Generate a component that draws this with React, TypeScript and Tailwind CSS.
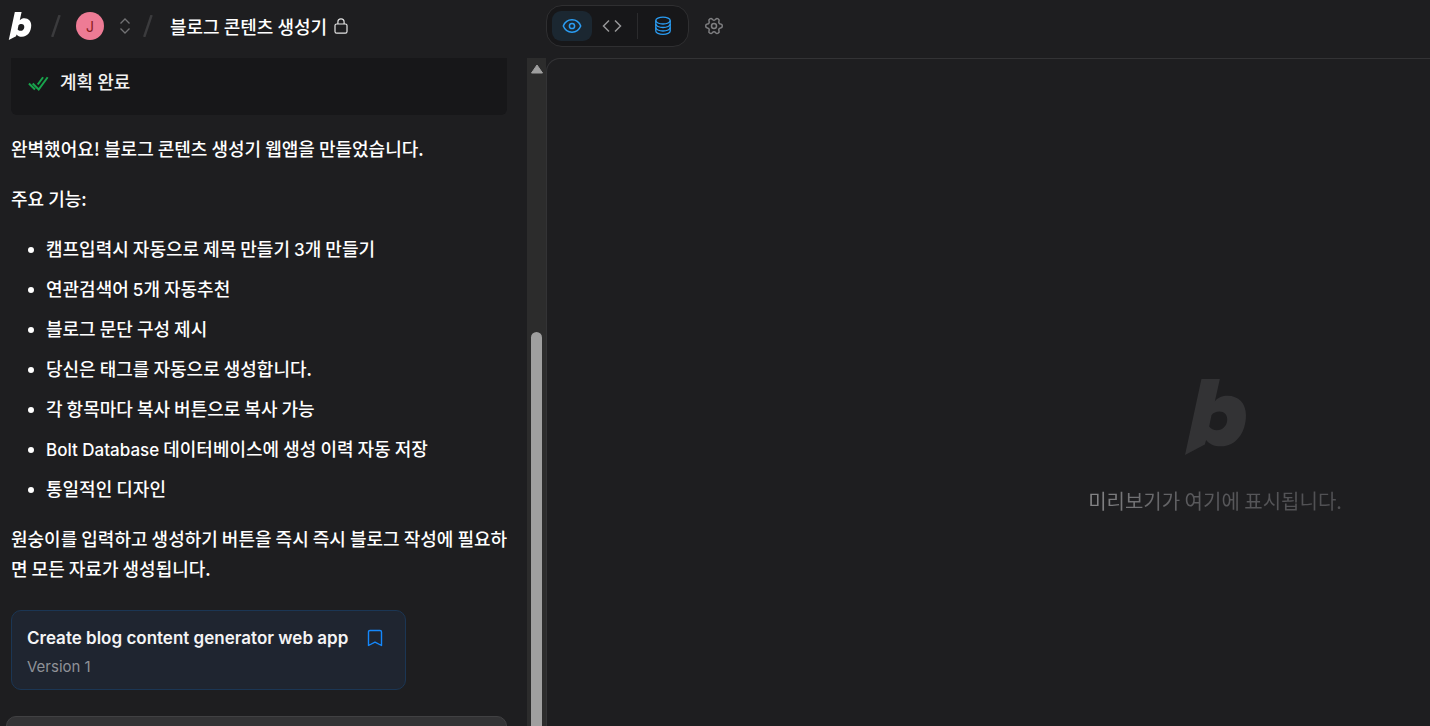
import type { ReactNode } from "react"
import { Settings } from "lucide-react"

const latin = "font-['Inter',sans-serif] text-[17px] leading-none"

function BoltLogo({ className }: { className?: string }) {
  return (
    <svg viewBox="0 0 182 227" className={className} fill="currentColor" aria-hidden="true">
      <path
        fillRule="evenodd"
        d="M49 0H104L89 67C98 55 112 50 127 50C160 50 182 73 182 108C182 160 152 201 107 201C86 201 73 194 63 182L59 196L0 227ZM79 108L72 142C77 149 85 153 95 153C113 153 126 139 126 121C126 106 117 97 103 97C93 97 84 101 79 108Z"
      />
    </svg>
  )
}

function Slash() {
  return (
    <svg viewBox="0 0 10 22" className="h-[22px] w-[10px]" stroke="#3b3b3d" strokeWidth="2.4" aria-hidden="true">
      <path d="M1.2 22L8.6 0" />
    </svg>
  )
}

const features: ReactNode[] = [
  <>캠프입력시 자동으로 제목 만들기 <span className={latin}>3</span>개 만들기</>,
  <>연관검색어 <span className={latin}>5</span>개 자동추천</>,
  "블로그 문단 구성 제시",
  "당신은 태그를 자동으로 생성합니다.",
  "각 항목마다 복사 버튼으로 복사 가능",
  <><span className={latin}>Bolt Database</span> 데이터베이스에 생성 이력 자동 저장</>,
  "통일적인 디자인",
]

function Header() {
  return (
    <header className="flex h-[58px] shrink-0 items-start pt-[5px]">
      <div className="flex h-[42px] w-[546px] shrink-0 items-center pl-2">
        <a href="#" aria-label="Bolt" className="text-white">
          <BoltLogo className="h-7 w-6" />
        </a>
        <div className="ml-[19px] flex items-center">
          <Slash />
          <span className="ml-[15px] flex h-7 w-7 items-center justify-center rounded-full bg-[#ee7b95] font-['Inter',sans-serif] text-[14px] text-[#8a1a1c]">
            J
          </span>
          <button aria-label="Switch workspace" className="ml-4 text-[#727274]">
            <svg viewBox="0 0 10 16" className="h-4 w-[10px]" fill="none" stroke="currentColor" strokeWidth="1.3">
              <path d="M0.5 5.5L5 1L9.5 5.5M0.5 10.5L5 15L9.5 10.5" />
            </svg>
          </button>
          <span className="ml-[13px]">
            <Slash />
          </span>
        </div>
        <h1 className="ml-[17px] text-[18px] leading-7 font-medium whitespace-nowrap text-white">블로그 콘텐츠 생성기</h1>
        <svg viewBox="0 0 14 16" className="ml-[7px] h-4 w-[14px]" fill="none" stroke="#e4e4e4" strokeWidth="1.2" aria-hidden="true">
          <rect x="1" y="6" width="12" height="9.2" rx="1.6" />
          <path d="M3.9 6V3.9a3.1 3.1 0 0 1 6.2 0V6" />
        </svg>
      </div>

      <div className="flex h-[42px] items-center rounded-[16px] border border-[#2f2f31] bg-[#171719] px-[5px]">
        <button aria-label="Preview" className="flex h-[30px] w-10 items-center justify-center rounded-[9px] bg-[#1b2731] text-[#2a9df4]">
          <svg viewBox="0 0 20 16" className="h-4 w-5" fill="none" stroke="currentColor" strokeWidth="1.5">
            <path d="M1.3 8C2.8 4.2 6 1.8 10 1.8S17.2 4.2 18.7 8C17.2 11.8 14 14.2 10 14.2S2.8 11.8 1.3 8Z" />
            <circle cx="10" cy="8" r="2.6" />
          </svg>
        </button>
        <button aria-label="Code" className="flex h-[30px] w-10 items-center justify-center text-[#969698]">
          <svg viewBox="0 0 20 14" className="h-[14px] w-5" fill="none" stroke="currentColor" strokeWidth="1.5">
            <path d="M7 1.5L1.5 7L7 12.5M13 1.5L18.5 7L13 12.5" />
          </svg>
        </button>
        <span className="ml-[5px] h-[26px] w-px bg-[#2b2b2d]" />
        <button aria-label="Database" className="ml-[5px] flex h-[30px] w-10 items-center justify-center text-[#2a9df4]">
          <svg viewBox="0 0 18 20" className="h-5 w-[18px]" fill="none" stroke="currentColor" strokeWidth="1.3">
            <ellipse cx="9" cy="4.6" rx="7.2" ry="3.4" />
            <path d="M1.8 4.6V15c0 1.9 3.2 3.4 7.2 3.4s7.2-1.5 7.2-3.4V4.6" />
            <path d="M1.8 8.1c0 1.9 3.2 3.4 7.2 3.4s7.2-1.5 7.2-3.4M1.8 11.6c0 1.9 3.2 3.4 7.2 3.4s7.2-1.5 7.2-3.4" />
          </svg>
        </button>
      </div>
      <button aria-label="Settings" className="ml-[15px] flex h-[42px] items-center text-[#7e7e80]">
        <Settings className="h-5 w-5 rotate-90" strokeWidth={1.8} />
      </button>
    </header>
  )
}

function Chat() {
  return (
    <section className="flex w-[527px] shrink-0 flex-col overflow-hidden pr-4 pl-[11px]">
      <div className="mr-1 flex h-[57px] shrink-0 items-start gap-[11px] rounded-b-md bg-[#171719] pt-[9px] pl-[17px]">
        <svg viewBox="0 0 22 16" className="mt-2 h-4 w-[21px]" fill="none" stroke="#18a44c" strokeWidth="2.1" aria-hidden="true">
          <path d="M1 8.5L7.3 14.8M4.9 8.5L11.2 14.8L20.6 2M10.2 9.6L15.8 2" />
        </svg>
        <h2 className="text-[18px] leading-7 font-medium text-[#f2f2f2]">계획 완료</h2>
      </div>

      <div className="shrink-0 pt-[18px] text-[18px] leading-[30px] font-medium break-all text-white">
        <p>완벽했어요! 블로그 콘텐츠 생성기 웹앱을 만들었습니다.</p>
        <p className="mt-5">주요 기능:</p>
        <ul className="mt-5 flex flex-col gap-[10px] pl-[17px]">
          {features.map((item, i) => (
            <li key={i} className="flex items-start gap-3">
              <span className="mt-[14px] h-[6px] w-[6px] shrink-0 rounded-full bg-white" />
              <span className="h-[30px]">{item}</span>
            </li>
          ))}
        </ul>
        <p className="mt-5">
          원숭이를 입력하고 생성하기 버튼을 즉시 즉시 블로그 작성에 필요하면 모든 자료가 생성됩니다.
        </p>
      </div>

      <div className="mt-[27px] flex w-[395px] shrink-0 flex-col rounded-[10px] border border-[#1b3654] bg-[#1f2530] pt-3 pr-[22px] pb-2 pl-[15px] font-['Inter',sans-serif]">
        <div className="flex items-center justify-between">
          <h3 className="text-[17px] leading-[30px] font-semibold whitespace-nowrap text-[#f4f4f5]">
            Create blog content generator web app
          </h3>
          <button aria-label="Bookmark version" className="text-[#1488fc]">
            <svg viewBox="0 0 16 18" className="h-[18px] w-4" fill="none" stroke="currentColor" strokeWidth="1.4" strokeLinejoin="round">
              <path d="M1.5 3c0-1 .6-1.5 1.5-1.5h10c.9 0 1.5.5 1.5 1.5v13.5L8 13.2L1.5 16.5Z" />
            </svg>
          </button>
        </div>
        <p className="text-[15px] leading-7 text-[#8f9298]">Version 1</p>
      </div>

      <div className="mt-[26px] mr-1 -ml-[5px] h-20 shrink-0 rounded-[10px] border border-[#414143] bg-[#333335]" />
    </section>
  )
}

function ScrollTrack() {
  return (
    <div className="flex w-[19px] shrink-0 flex-col items-center bg-[#2c2c2c]" aria-hidden="true">
      <svg viewBox="0 0 14 10" className="mt-[6px] h-[10px] w-[14px] shrink-0">
        <path d="M7 1L12.5 9H1.5Z" fill="#9f9f9f" stroke="#9f9f9f" strokeLinejoin="round" />
      </svg>
      <div className="mt-[258px] w-[11px] flex-1 rounded-t-full bg-[#9f9f9f]" />
    </div>
  )
}

function Preview() {
  return (
    <section className="flex flex-1 flex-col items-center rounded-tl-[14px] border-t border-l border-[#333335] pt-80 pl-[453px]">
      <BoltLogo className="h-[76px] w-[61px] shrink-0 text-[#333335]" />
      <p className="mt-[31px] bg-linear-to-r from-[#858587] via-[#5a5a5d] via-40% to-[#4f4f52] bg-clip-text text-[20px] leading-[30px] whitespace-nowrap text-transparent">
        미리보기가 여기에 표시됩니다.
      </p>
    </section>
  )
}

export default function App() {
  return (
    <div className="flex h-screen flex-col overflow-hidden bg-[#1e1e20] font-['Noto_Sans_CJK_KR','Inter',sans-serif]">
      <Header />
      <main className="flex min-h-0 flex-1">
        <Chat />
        <ScrollTrack />
        <Preview />
      </main>
    </div>
  )
}
